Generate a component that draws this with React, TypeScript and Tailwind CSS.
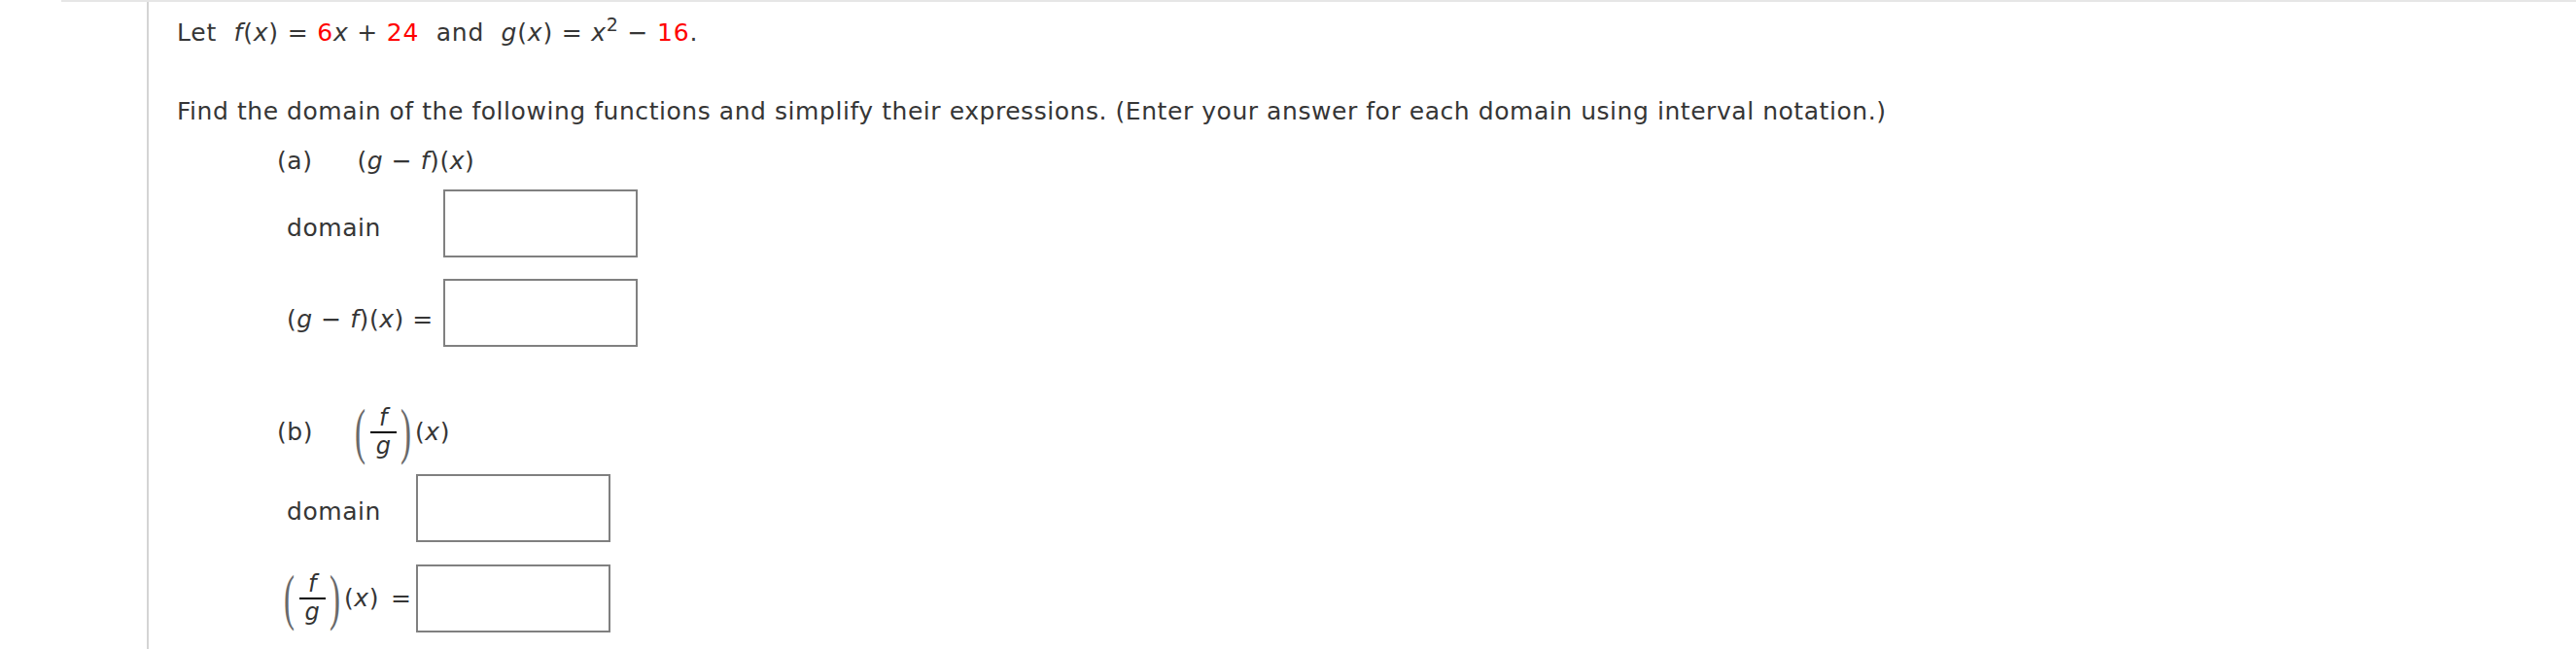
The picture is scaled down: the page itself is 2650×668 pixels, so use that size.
import * as React from "react"

// italic math variable
function V({ children }: { children: React.ReactNode }) {
    return <span className="italic">{children}</span>
}

function Red({ children }: { children: React.ReactNode }) {
    return <span className="text-[#ff0000]">{children}</span>
}

// stretched delimiter around the fraction
function BigParen({ side }: { side: "(" | ")" }) {
    return (
        <span className="inline-flex w-[10px] h-[60px] items-center justify-center overflow-visible">
            <span className="inline-block font-['Liberation_Serif',serif] text-[44px] leading-none text-[#6a6a6a] scale-y-[1.45] scale-x-[0.75] origin-center">
                {side}
            </span>
        </span>
    )
}

// (f/g)(x)
function FracFG() {
    return (
        <span className="inline-flex items-center">
            <BigParen side="(" />
            <span className="inline-flex flex-col items-center mx-[5px]">
                <span className="italic text-[24px] leading-[27px] text-[#333]">f</span>
                <span className="block w-[27px] h-[2px] bg-black" />
                <span className="italic text-[24px] leading-[27px] text-[#333]">g</span>
            </span>
            <BigParen side=")" />
            <span className="ml-[4px]">
                (<V>x</V>)
            </span>
        </span>
    )
}

function AnswerBox() {
    return <div className="w-[200px] h-[70px] border-2 border-[#808080] bg-white shrink-0" />
}

export default function App() {
    return (
        <div className="w-[2650px] h-[668px] bg-white overflow-hidden font-['DejaVu_Sans',Verdana,sans-serif] text-[25px] tracking-[0.55px] leading-[36px] text-[#363636]">
            <div className="ml-[63px] h-full border-t-2 border-[#e6e6e6]">
                <div className="ml-[88px] h-full border-l-2 border-[#d4d4d4] pl-[29px] pt-[14px]">
                    {/* problem statement */}
                    <p className="whitespace-pre tracking-[0.8px]">
                        Let  <V>f</V>(<V>x</V>) = <Red>6</Red><V>x</V> + <Red>24</Red>  and  <V>g</V>(<V>x</V>) ={" "}
                        <V>x</V>
                        <span className="inline-block text-[19px] leading-none relative -top-[10px]">2</span> −{" "}
                        <Red>16</Red>.
                    </p>

                    <p className="mt-[45px]">
                        Find the domain of the following functions and simplify their expressions. (Enter your
                        answer for each domain using interval notation.)
                    </p>

                    {/* part (a) */}
                    <div className="mt-[15px] ml-[103px] flex gap-[46px]">
                        <span>(a)</span>
                        <span className="whitespace-pre">
                            (<V>g</V> − <V>f</V>)(<V>x</V>)
                        </span>
                    </div>

                    <div className="mt-[11px] ml-[113px] flex items-start">
                        <span className="w-[161px] pt-[22px]">domain</span>
                        <AnswerBox />
                    </div>

                    <div className="mt-[22px] ml-[113px] flex items-start">
                        <span className="w-[161px] pt-[24px] whitespace-pre">
                            (<V>g</V> − <V>f</V>)(<V>x</V>) =
                        </span>
                        <AnswerBox />
                    </div>

                    {/* part (b) */}
                    <div className="mt-[56px] ml-[103px] h-[64px] flex items-center gap-[44px]">
                        <span>(b)</span>
                        <FracFG />
                    </div>

                    <div className="mt-[11px] ml-[113px] flex items-start">
                        <span className="w-[133px] pt-[21px]">domain</span>
                        <AnswerBox />
                    </div>

                    <div className="mt-[23px] ml-[111px] flex items-center">
                        <span className="w-[135px] flex items-center">
                            <FracFG />
                            <span className="ml-[12px]">=</span>
                        </span>
                        <AnswerBox />
                    </div>
                </div>
            </div>
        </div>
    )
}
